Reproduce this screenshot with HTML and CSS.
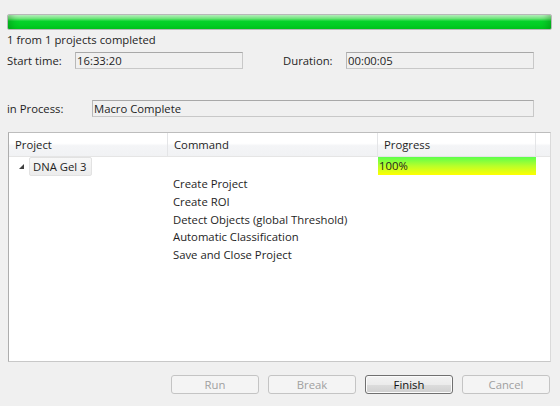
FILE: index.html
```html
<!DOCTYPE html>
<html>
<head>
<meta charset="utf-8">
<link rel="stylesheet" href="styles.css">
</head>
<body>
<div class="dialog">
  <div class="pbar"><div class="pfill"></div></div>
  <div class="status">1 from 1 projects completed</div>
  <div class="times">
    <span class="lbl lbl-start">Start time:</span>
    <div class="field f-start">16:33:20</div>
    <span class="lbl lbl-dur">Duration:</span>
    <div class="field f-dur">00:00:05</div>
  </div>
  <div class="proc">
    <span class="lbl lbl-proc">in Process:</span>
    <div class="field f-proc">Macro Complete</div>
  </div>
  <div class="table">
    <div class="thead">
      <div class="th c1">Project</div>
      <div class="th c2">Command</div>
      <div class="th c3">Progress</div>
      <div class="th c4"></div>
    </div>
    <div class="row r-main">
      <div class="c1 proj"><span class="tri"></span><span class="tag">DNA Gel 3</span></div>
      <div class="c2"></div>
      <div class="c3 pcell">100%</div>
    </div>
    <div class="row"><div class="c1"></div><div class="c2 cmd">Create Project</div></div>
    <div class="row"><div class="c1"></div><div class="c2 cmd">Create ROI</div></div>
    <div class="row"><div class="c1"></div><div class="c2 cmd">Detect Objects (global Threshold)</div></div>
    <div class="row"><div class="c1"></div><div class="c2 cmd">Automatic Classification</div></div>
    <div class="row"><div class="c1"></div><div class="c2 cmd">Save and Close Project</div></div>
  </div>
  <div class="buttons">
    <button class="btn dis">Run</button>
    <button class="btn dis">Break</button>
    <button class="btn def">Finish</button>
    <button class="btn dis">Cancel</button>
  </div>
</div>
</body>
</html>
```
FILE: styles.css
```css
html, body {
  margin: 0;
  padding: 0;
  background: #f0f0f0;
}
body {
  width: 560px;
  height: 406px;
  overflow: hidden;
  font-family: "Open Sans", "Noto Sans", sans-serif;
  font-size: 11.3px;
  color: #1e1e1e;
}
.dialog {
  display: flex;
  flex-direction: column;
  padding: 14px 0 0 0;
}
.pbar {
  margin: 0 8px 0 7px;
  height: 16px;
  box-sizing: border-box;
  border: 1px solid #b8b8b8;
  border-radius: 2px;
  background: #e6e6e6;
  overflow: hidden;
}
.pfill {
  height: 100%;
  background: linear-gradient(to bottom, #bff5c6 0%, #6ee57a 25%, #06d22a 45%, #00c81e 100%);
  box-shadow: inset 8px 0 6px -4px rgba(0,80,0,0.25), inset -8px 0 6px -4px rgba(0,80,0,0.25);
}
.status {
  margin: 2px 0 0 7px;
  height: 16px;
  line-height: 16px;
}
.times {
  display: flex;
  align-items: center;
  margin-top: 4px;
  height: 17px;
}
.lbl {
  line-height: 17px;
}
.field {
  box-sizing: border-box;
  height: 17px;
  line-height: 15px;
  border: 1px solid #c8c8c8;
  border-top-color: #a8a8a8;
  border-left-color: #b8b8b8;
  background: #f0f0f0;
  padding-left: 1px;
}
.lbl-start { margin-left: 7px; width: 68px; }
.f-start { width: 168px; }
.lbl-dur { margin-left: 40px; width: 63px; }
.f-dur { width: 188px; }
.proc {
  display: flex;
  align-items: center;
  margin-top: 31px;
  height: 17px;
}
.lbl-proc { margin-left: 7px; width: 85px; }
.f-proc { width: 442px; padding-left: 1px; }
.table {
  margin: 15px 9px 0 8px;
  height: 230px;
  box-sizing: border-box;
  border: 1px solid #adadad;
  border-color: #bdbdbd #dadada #c8c8c8 #adadad;
  background: #fff;
}
.thead {
  display: flex;
  height: 23px;
  border-bottom: 1px solid #e5e5e5;
  background: linear-gradient(to bottom, #ffffff 0%, #ffffff 45%, #f4f5f7 55%, #f1f2f4 100%);
}
.th {
  box-sizing: border-box;
  line-height: 23px;
  padding-left: 6px;
  border-right: 1px solid #e4e5e7;
}
.c1 { width: 159px; flex: none; }
.c2 { width: 210px; flex: none; }
.c3 { width: 158px; flex: none; }
.c4 { flex: 1; border-right: none; }
.row {
  display: flex;
  height: 17.8px;
  line-height: 18px;
}
.r-main { height: 18px; margin-top: 0; margin-bottom: 0; }
.proj {
  display: flex;
  align-items: center;
}
.tri {
  width: 0;
  height: 0;
  margin-left: 10px;
  margin-right: 5px;
  border-left: 5px solid transparent;
  border-bottom: 5px solid #404040;
}
.tag {
  box-sizing: border-box;
  height: 19px;
  line-height: 17px;
  padding: 0 4px 0 3px;
  border: 1px solid #e2e2e2;
  border-radius: 2px;
  background: linear-gradient(to bottom, #f8f8f8, #ececec);
}
.pcell {
  box-sizing: border-box;
  height: 18px;
  line-height: 18px;
  padding-left: 1px;
  background: linear-gradient(to bottom, #5cff4c 0%, #b8ff2a 50%, #ffff00 100%);
}
.cmd {
  padding-left: 5px;
  box-sizing: border-box;
  width: 300px;
}
.buttons {
  display: flex;
  justify-content: flex-end;
  gap: 9px;
  margin: 13px 10px 0 0;
}
.btn {
  box-sizing: border-box;
  width: 88px;
  height: 19px;
  padding: 0;
  font-family: inherit;
  font-size: 11.3px;
  border: 1px solid #c4c4c4;
  border-radius: 3px;
  background: #f4f4f4;
  color: #a0a0a0;
}
.def {
  border-color: #707070;
  background: linear-gradient(to bottom, #f3f3f3 0%, #ebebeb 50%, #dddddd 50%, #cfcfcf 100%);
  color: #111;
  box-shadow: inset 0 0 0 1px #fbfbfb;
}
```
